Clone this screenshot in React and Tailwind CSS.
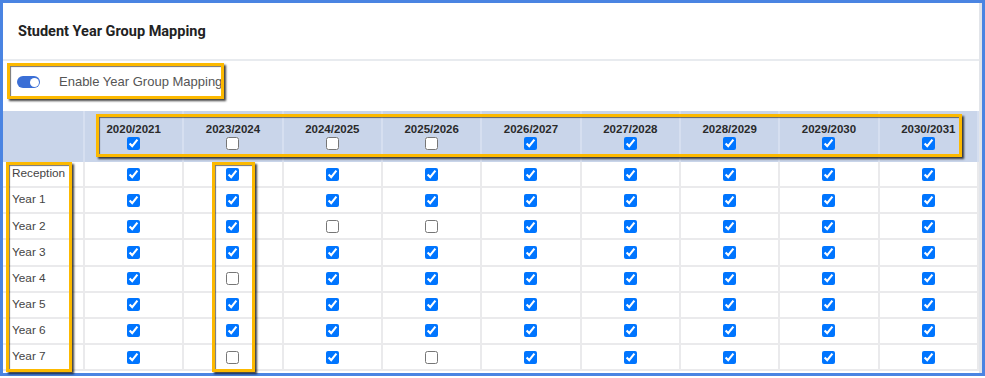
import React from "react";

const years = ["2020/2021","2023/2024","2024/2025","2025/2026","2026/2027","2027/2028","2028/2029","2029/2030","2030/2031"];
const headerChecks = [1,0,0,0,1,1,1,1,1];
const rows = [
  ["Reception", [1,1,1,1,1,1,1,1,1]],
  ["Year 1", [1,1,1,1,1,1,1,1,1]],
  ["Year 2", [1,1,0,0,1,1,1,1,1]],
  ["Year 3", [1,1,1,1,1,1,1,1,1]],
  ["Year 4", [1,0,1,1,1,1,1,1,1]],
  ["Year 5", [1,1,1,1,1,1,1,1,1]],
  ["Year 6", [1,1,1,1,1,1,1,1,1]],
  ["Year 7", [1,0,1,0,1,1,1,1,1]],
];

function Box({ className }) {
  return (
    <div
      className={
        "absolute border-[3px] border-[#fcb900] pointer-events-none shadow-[2px_2px_2px_rgba(0,0,0,0.75),inset_1px_1px_1px_rgba(0,0,0,0.55)] " +
        className
      }
    />
  );
}

export default function App() {
  return (
    <div className="relative w-[985px] h-[378px] bg-white font-['Liberation_Sans',Arial,sans-serif] text-[#333]">
      <div className="h-[376px] border-[3px] border-[#4a84e2] flex flex-col">
        <div className="flex-1 border-r-[3px] border-[#e2e5ea] flex flex-col overflow-hidden">
          <div className="h-[58px] shrink-0 flex items-center pl-[15px] pt-[1px] border-b-[2px] border-[#e8ebef]">
            <span className="font-['Roboto',sans-serif] font-bold text-[14.5px] text-[#222]">Student Year Group Mapping</span>
          </div>
          <div className="h-[50px] shrink-0 flex items-center pl-[14px] pb-[8px]">
            <div className="w-[23px] h-[12px] rounded-full bg-[#3b6fd6] flex items-center justify-end pr-[1.5px]">
              <div className="w-[9px] h-[9px] rounded-full bg-white" />
            </div>
            <span className="ml-[19px] text-[13px] text-[#555]">Enable Year Group Mapping</span>
          </div>
          <div className="grid grid-cols-[82px_repeat(9,1fr)]">
            <div className="h-[51px] bg-[#c9d5ea] border-r-[2px] border-[#d6dff0]" />
            {years.map((y, i) => (
              <div key={y} className="h-[51px] bg-[#c9d5ea] border-r-[2px] border-[#d6dff0] last:border-r-0 flex flex-col items-center pt-[11px]">
                <span className="font-bold text-[11.5px] leading-[14px] text-[#2a2a2a]">{y}</span>
                <input type="checkbox" readOnly checked={!!headerChecks[i]} className="mt-[1px] w-[13px] h-[13px]" />
              </div>
            ))}
            {rows.map(([label, vals]) => (
              <React.Fragment key={label}>
                <div className="h-[26.15px] border-b-[2px] border-r-[2px] border-[#eaeaec] flex items-center pl-[9px] text-[11.8px] text-[#444]">
                  {label}
                </div>
                {vals.map((v, j) => (
                  <div key={j} className="h-[26.15px] border-b-[2px] border-r-[2px] border-[#eaeaec] flex items-center justify-center">
                    <input type="checkbox" readOnly checked={!!v} className="w-[13px] h-[13px]" />
                  </div>
                ))}
              </React.Fragment>
            ))}
          </div>
        </div>
      </div>
      <Box className="left-[7px] top-[63px] w-[217px] h-[36px]" />
      <Box className="left-[96px] top-[114px] w-[866px] h-[43px]" />
      <Box className="left-[6px] top-[162px] w-[66px] h-[210px]" />
      <Box className="left-[212px] top-[162px] w-[43px] h-[210px]" />
    </div>
  );
}
